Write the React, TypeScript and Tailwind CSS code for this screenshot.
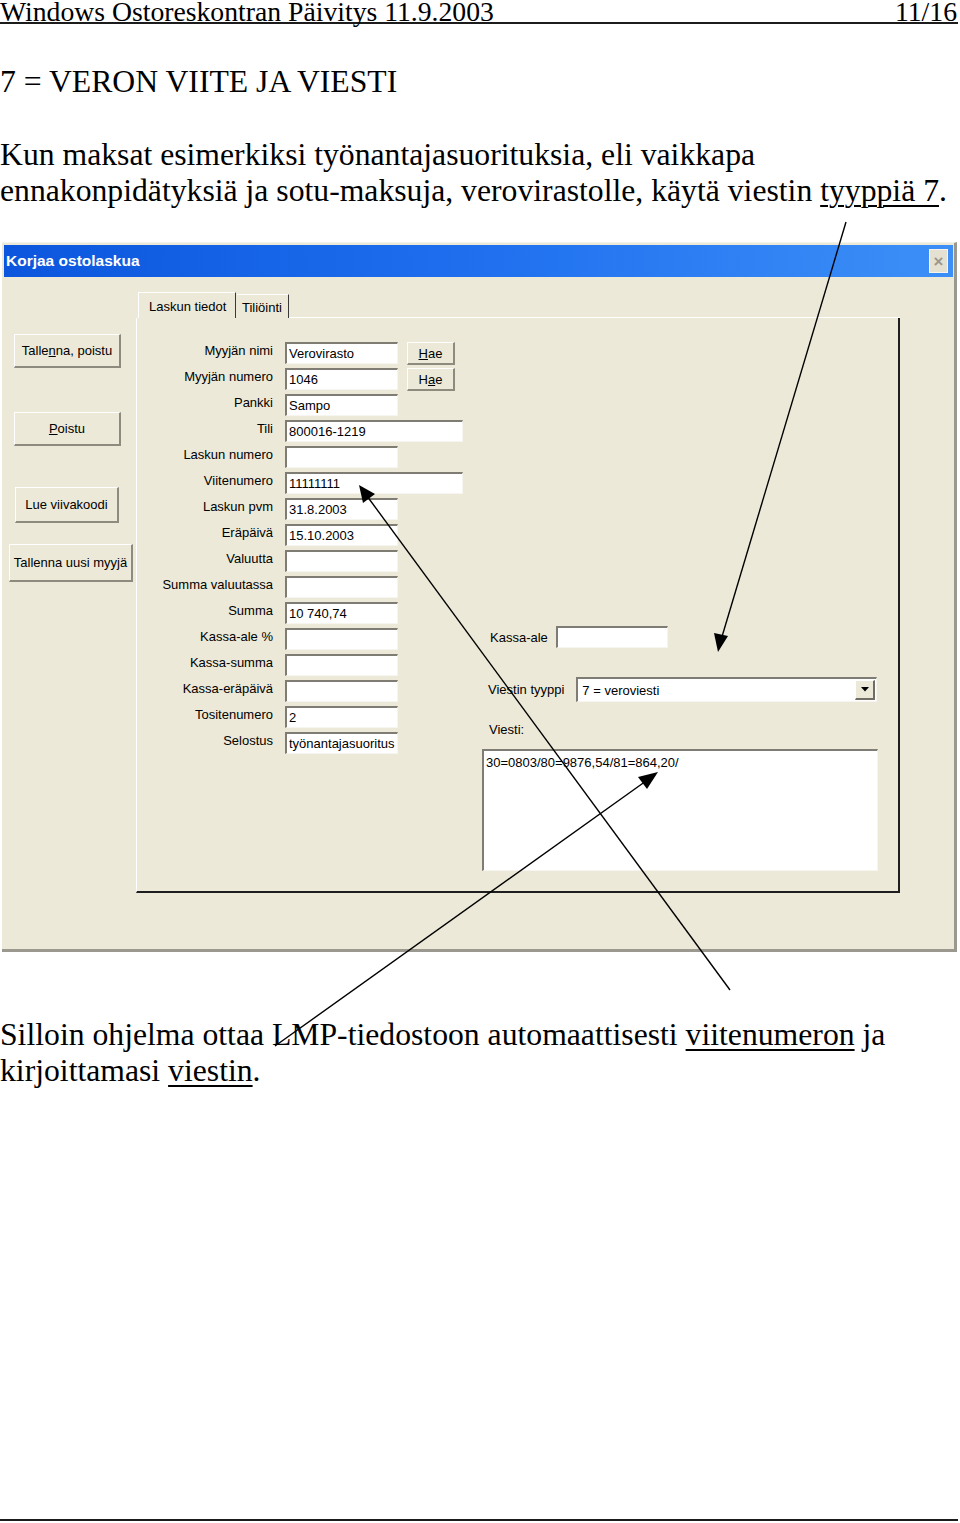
import React from "react";

// page from a printed manual: text, a dialog screenshot and arrows drawn on top

const sans = "font-['Liberation_Sans',Arial,sans-serif]";

type Row = { label: string; value: string; wide?: boolean; hae?: React.ReactNode };

const rows: Row[] = [
    { label: "Myyjän nimi", value: "Verovirasto", hae: <><u>H</u>ae</> },
    { label: "Myyjän numero", value: "1046", hae: <>H<u>a</u>e</> },
    { label: "Pankki", value: "Sampo" },
    { label: "Tili", value: "800016-1219", wide: true },
    { label: "Laskun numero", value: "" },
    { label: "Viitenumero", value: "11111111", wide: true },
    { label: "Laskun pvm", value: "31.8.2003" },
    { label: "Eräpäivä", value: "15.10.2003" },
    { label: "Valuutta", value: "" },
    { label: "Summa valuutassa", value: "" },
    { label: "Summa", value: "10 740,74" },
    { label: "Kassa-ale %", value: "" },
    { label: "Kassa-summa", value: "" },
    { label: "Kassa-eräpäivä", value: "" },
    { label: "Tositenumero", value: "2" },
    { label: "Selostus", value: "työnantajasuoritus" },
];

function Btn({ children, className }: { children: React.ReactNode; className: string }) {
    return (
        <div
            className={`flex items-center justify-center bg-[#ece9d8] border-t border-l border-r-2 border-b-2 border-t-white border-l-white border-r-[#8d8a7e] border-b-[#8d8a7e] text-[13px] leading-none whitespace-nowrap ${className}`}
        >
            {children}
        </div>
    );
}

function Field({ value, className }: { value: string; className: string }) {
    return (
        <div
            className={`h-[22px] bg-white border-t-2 border-l-2 border-b border-r border-t-[#7f7d73] border-l-[#7f7d73] border-b-[#f6f5f0] border-r-[#f6f5f0] pl-[2px] text-[13px] leading-[19px] whitespace-nowrap overflow-hidden ${className}`}
        >
            {value}
        </div>
    );
}

function Dialog() {
    return (
        <div className={`ml-[2px] mt-[33px] w-[955px] h-[710px] flex flex-col bg-[#ece9d8] border-t border-t-[#f3f2ec] border-r-[3px] border-b-[3px] border-r-[#9b998f] border-b-[#9b998f] text-black ${sans}`}>
            {/* title bar */}
            <div className="mt-[2px] ml-[2px] mr-[1px] h-[32px] flex items-center justify-between bg-linear-to-r from-[#0b56dd] via-[#1f6fef] to-[#3d8ff7]">
                <span className="ml-[2px] text-white font-bold text-[15.5px] leading-none">Korjaa ostolaskua</span>
                <div className="mr-[5px] w-[19px] h-[24px] flex items-center justify-center bg-[#e4e0d2] border border-[#f6f4ec] text-[#9d978b] text-[17px] font-bold leading-none">
                    ×
                </div>
            </div>

            <div className="flex flex-1">
                {/* left buttons */}
                <div className="w-[134px] flex flex-col items-start">
                    <Btn className="mt-[57px] ml-[12px] w-[107px] h-[34px]">
                        Talle<u>n</u>na, poistu
                    </Btn>
                    <Btn className="mt-[44px] ml-[12px] w-[107px] h-[34px]">
                        <u>P</u>oistu
                    </Btn>
                    <Btn className="mt-[41px] ml-[13px] w-[104px] h-[36px]">Lue viivakoodi</Btn>
                    <Btn className="mt-[21px] ml-[7px] w-[124px] h-[38px]">Tallenna uusi myyjä</Btn>
                </div>

                {/* tab control */}
                <div className="pt-[15px] w-[764px] flex flex-col">
                    <div className="flex h-[26px] items-end">
                        <div className="ml-[2px] w-[98px] h-[26px] border-l border-t border-white border-r border-r-[#3a3a3a] flex items-center pl-[10px] pt-[2px] text-[13px]">
                            Laskun tiedot
                        </div>
                        <div className="ml-[1px] w-[52px] h-[24px] border-t border-t-white border-r border-r-[#3a3a3a] flex items-center pl-[5px] pt-[2px] text-[13px]">
                            Tiliöinti
                        </div>
                        <div className="flex-1 h-[1px] bg-white"></div>
                    </div>
                    <div className="h-[575px] border-l border-l-white border-r-2 border-b-2 border-r-[#1e1e1e] border-b-[#1e1e1e] flex">
                        {/* form */}
                        <div className="w-[330px] pt-[24px] flex flex-col gap-[4px]">
                            {rows.map((r) => (
                                <div key={r.label} className="flex items-start h-[22px]">
                                    <div className="w-[136px] text-right text-[13px] leading-[16px] pt-[1px] whitespace-nowrap">
                                        {r.label}
                                    </div>
                                    <Field value={r.value} className={`ml-[12px] ${r.wide ? "w-[178px]" : "w-[113px]"}`} />
                                    {r.hae && <Btn className="ml-[9px] w-[48px] h-[23px]">{r.hae}</Btn>}
                                </div>
                            ))}
                        </div>

                        {/* message part */}
                        <div className="ml-[14px] w-[397px] pt-[308px] flex flex-col">
                            <div className="flex items-start pl-[9px]">
                                <span className="text-[13px] leading-[16px] pt-[4px]">Kassa-ale</span>
                                <Field value="" className="ml-[8px] w-[112px]" />
                            </div>
                            <div className="mt-[29px] flex items-start pl-[7px]">
                                <span className="text-[13px] leading-[16px] pt-[5px]">Viestin tyyppi</span>
                                <div className="ml-[12px] w-[301px] h-[25px] flex items-center justify-between bg-white border-t-2 border-l-2 border-b border-r border-t-[#7f7d73] border-l-[#7f7d73] border-b-[#f6f5f0] border-r-[#f6f5f0]">
                                    <span className="pl-[4px] text-[13px] leading-none">7 = veroviesti</span>
                                    <div className="mr-[1px] w-[20px] h-[20px] flex items-center justify-center bg-[#ece9d8] border-t border-l border-r-2 border-b-2 border-t-white border-l-white border-r-[#6f6d64] border-b-[#6f6d64]">
                                        <svg width="8" height="5" viewBox="0 0 8 5">
                                            <path d="M0 0h8L4 4.5z" fill="#000" />
                                        </svg>
                                    </div>
                                </div>
                            </div>
                            <div className="mt-[20px] pl-[8px] text-[13px] leading-[16px]">Viesti:</div>
                            <div className="mt-[11px] ml-[1px] w-[396px] h-[122px] bg-white border-t-2 border-l-2 border-b border-r border-t-[#7f7d73] border-l-[#7f7d73] border-b-[#f6f5f0] border-r-[#f6f5f0] pl-[2px] pt-[4px] text-[13px] leading-[16px]">
                                30=0803/80=9876,54/81=864,20/
                            </div>
                        </div>
                    </div>
                </div>
            </div>
        </div>
    );
}

export default function App() {
    return (
        <div className="relative w-[960px] h-[1523px] bg-white overflow-hidden flex flex-col font-['Liberation_Serif','Times_New_Roman',serif] text-black">
            <header className="mr-[2px] h-[24px] pt-[1px] flex justify-between border-b-2 border-[#1c1c1c] text-[27.7px] leading-[22px]">
                <span>Windows Ostoreskontran Päivitys 11.9.2003</span>
                <span className="mr-[1px]">11/16</span>
            </header>

            <h1 className="mt-[40px] text-[31.7px] leading-[36px] font-normal">7 = VERON VIITE JA VIESTI</h1>

            <p className="mt-[37px] text-[31.7px] leading-[36px]">
                Kun maksat esimerkiksi työnantajasuorituksia, eli vaikkapa
                <br />
                ennakonpidätyksiä ja sotu-maksuja, verovirastolle, käytä viestin{" "}
                <span className="underline decoration-[1.5px] underline-offset-[4px]">tyyppiä 7</span>.
            </p>

            <Dialog />

            <p className="mt-[65px] text-[31.7px] leading-[36px]">
                Silloin ohjelma ottaa LMP-tiedostoon automaattisesti{" "}
                <span className="underline decoration-[1.5px] underline-offset-[4px]">viitenumeron</span> ja
                <br />
                kirjoittamasi <span className="underline decoration-[1.5px] underline-offset-[4px]">viestin</span>.
            </p>

            <div className="mt-auto mb-[2px] mr-[2px] h-[2px] bg-[#1c1c1c]"></div>

            {/* annotation arrows over the screenshot */}
            <svg className="absolute top-0 left-0 pointer-events-none" width="960" height="1523" viewBox="0 0 960 1523">
                <g stroke="#000" strokeWidth="1.4" fill="none">
                    <line x1="846" y1="222" x2="721" y2="640" />
                    <line x1="730" y1="990" x2="367" y2="496" />
                    <line x1="275" y1="1046" x2="646" y2="781" />
                </g>
                <g fill="#000">
                    <polygon points="718,652 728,636 714,633" />
                    <polygon points="359,485 375,494 363,503" />
                    <polygon points="658,772 647,789 638,777" />
                </g>
            </svg>
        </div>
    );
}
